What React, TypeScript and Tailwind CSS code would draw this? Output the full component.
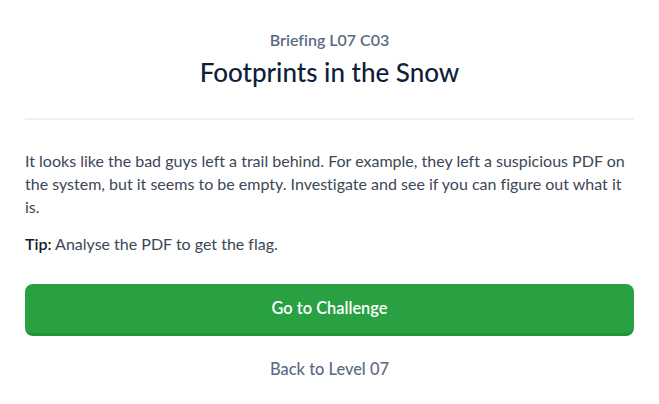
import React from "react";

export default function App() {
  return (
    <div className="w-[659px] h-[404px] bg-white font-['Lato','Open_Sans',sans-serif] [font-variant-ligatures:none] px-[25px]">
      <div className="pt-[30px] flex flex-col items-center">
        <div className="text-[16px] font-semibold text-[#5b6b82] leading-[20px]">Briefing L07 C03</div>
        <h1 className="mt-[6px] text-[26px] font-medium text-[#0e1f3b] leading-[32px]">Footprints in the Snow</h1>
      </div>
      <div className="mt-[30px] h-[2px] bg-[#edf1f5]" />
      <p className="mt-[29px] text-[16px] leading-[23px] text-[#3b4757]">
        It looks like the bad guys left a trail behind. For example, they left a suspicious PDF on the system, but it seems to be empty. Investigate and see if you can figure out what it is.
      </p>
      <p className="mt-[14px] text-[16px] leading-[23px] text-[#3b4757]">
        <span className="font-semibold text-[#0e1a2b]">Tip:</span> Analyse the PDF to get the flag.
      </p>
      <button className="mt-[29px] w-full h-[52px] rounded-[8px] bg-[#29a142] border-b-[3px] border-[#23903a] text-white text-[16.4px] font-semibold">
        Go to Challenge
      </button>
      <div className="mt-[23px] text-center text-[16.4px] leading-[20px] text-[#5b6b82] font-medium">Back to Level 07</div>
    </div>
  );
}
